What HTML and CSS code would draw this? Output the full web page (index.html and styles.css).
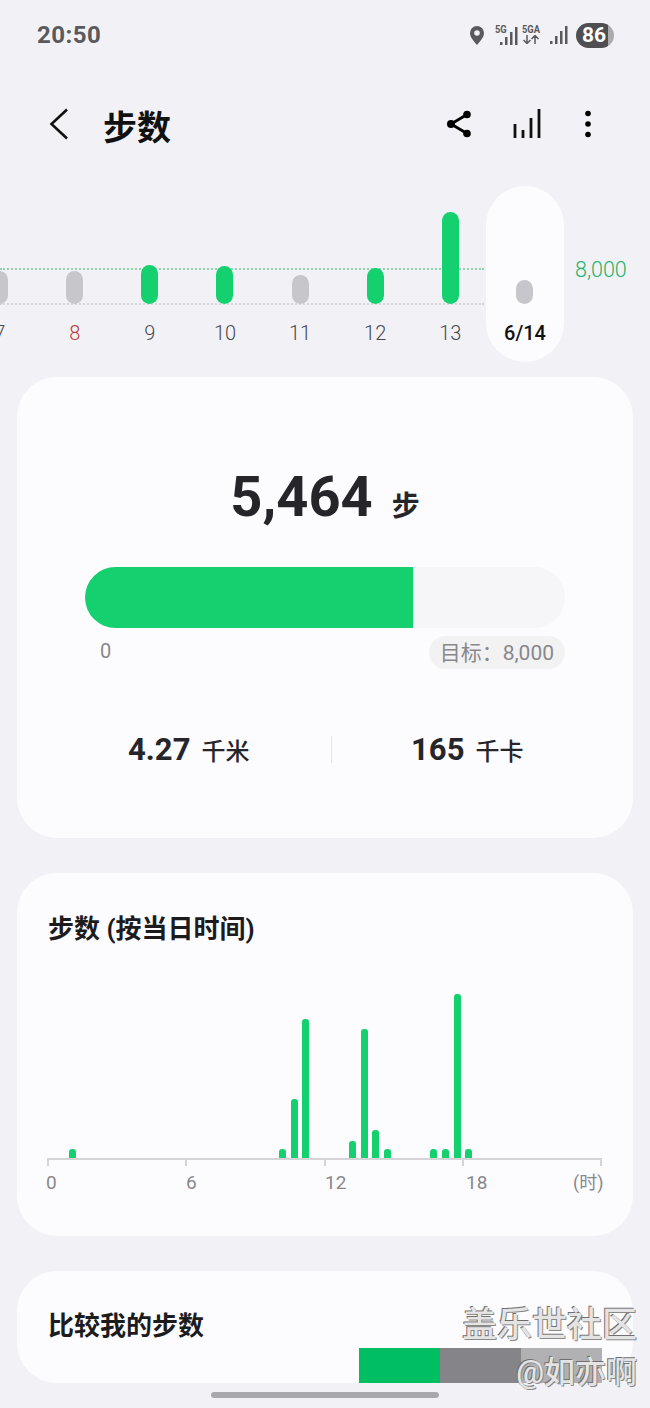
FILE: index.html
```html
<!DOCTYPE html>
<html lang="zh-CN">
<head>
    <meta charset="UTF-8">
    <meta name="viewport" content="width=device-width, initial-scale=1.0">
    <title>步数</title>
    <link rel="stylesheet" href="styles.css">
</head>
<body>
    <div id="screen">
        <div class="status-bar">
            <span class="clock">20:50</span>
            <div class="status-icons">
                <svg class="pin" width="14" height="19" viewBox="0 0 14 19"><path fill-rule="evenodd" d="M7 0a7 7 0 0 1 7 7c0 4.600-4.500 9-7 12-2.500-3-7-7.400-7-12a7 7 0 0 1 7-7zm0 4.200a2.800 2.800 0 1 0 0 5.600 2.800 2.800 0 0 0 0-5.600z"/></svg>
                <div class="net net-5g">
                    <span class="net-label">5G</span>
                    <svg width="18" height="18" viewBox="0 0 18 18"><path d="M0 15h2.500v3H0zM5 10h2.500v8H5zM10 5h2.500v13H10zM15 0h2.500v18H15z"/></svg>
                </div>
                <div class="net net-5ga">
                    <span class="net-label">5GA</span>
                    <svg width="18" height="9" viewBox="0 0 18 9" fill="none" stroke="#5a5a5c" stroke-width="1.500"><path d="M5 0v8M1.500 5 5 8.500 8.500 5M13 9V1M9.500 4 13 .5 16.500 4"/></svg>
                </div>
                <svg class="signal" width="18" height="18" viewBox="0 0 18 18"><path d="M0 15h2.500v3H0zM5 10h2.500v8H5zM10 5h2.500v13H10zM15 0h2.500v18H15z"/></svg>
                <div class="battery"><span>86</span></div>
            </div>
        </div>

        <div class="app-bar">
            <svg class="back" width="20" height="32" viewBox="0 0 20 32" fill="none" stroke="#111" stroke-width="2.600"><path d="M18 1.500 2.500 16 18 30.500"/></svg>
            <div class="page-title">步数</div>
            <svg class="share" width="24" height="28" viewBox="0 0 24 28"><path d="M20 4.500 4 14l16 9.500" fill="none" stroke="#000" stroke-width="2.800"/><circle cx="20" cy="4.500" r="3.800"/><circle cx="4" cy="14" r="4"/><circle cx="20" cy="23.500" r="3.800"/></svg>
            <svg class="stats" width="28" height="30" viewBox="0 0 28 30" fill="none" stroke="#111" stroke-width="2.800"><path d="M2 15v14M10 21v8M18 9v20M26 0v29"/></svg>
            <svg class="more" width="8" height="28" viewBox="0 0 8 28"><circle cx="4" cy="3.500" r="2.800"/><circle cx="4" cy="14" r="2.800"/><circle cx="4" cy="24.500" r="2.800"/></svg>
        </div>

        <div class="trend">
            <div class="line line-goal"></div>
            <div class="line line-base"></div>
            <div class="day"><div class="plot"><div class="pill off h33"></div></div><span>7</span></div>
            <div class="day red"><div class="plot"><div class="pill off h33"></div></div><span>8</span></div>
            <div class="day"><div class="plot"><div class="pill h39"></div></div><span>9</span></div>
            <div class="day"><div class="plot"><div class="pill h38"></div></div><span>10</span></div>
            <div class="day"><div class="plot"><div class="pill off h29"></div></div><span>11</span></div>
            <div class="day"><div class="plot"><div class="pill h36"></div></div><span>12</span></div>
            <div class="day"><div class="plot"><div class="pill h92"></div></div><span>13</span></div>
            <div class="day today"><div class="plot"><div class="pill off h24"></div></div><span>6/14</span></div>
            <div class="goal-label">8,000</div>
        </div>

        <div class="card card-today">
            <div class="total"><b>5,464</b><span>步</span></div>
            <div class="progress"><div class="progress-fill" style="width: 68.300%"></div></div>
            <div class="progress-labels">
                <span class="zero">0</span>
                <span class="target">目标：8,000</span>
            </div>
            <div class="summary">
                <div class="summary-item"><b>4.27</b><span>千米</span></div>
                <div class="summary-divider"></div>
                <div class="summary-item"><b>165</b><span>千卡</span></div>
            </div>
        </div>

        <div class="card card-hours">
            <h2>步数 (按当日时间)</h2>
            <div class="hour-bars">
                <i style="grid-column: 3; height: 9px"></i>
                <i style="grid-column: 21; height: 9px"></i>
                <i style="grid-column: 22; height: 59px"></i>
                <i style="grid-column: 23; height: 139px"></i>
                <i style="grid-column: 27; height: 17px"></i>
                <i style="grid-column: 28; height: 129px"></i>
                <i style="grid-column: 29; height: 28px"></i>
                <i style="grid-column: 30; height: 9px"></i>
                <i style="grid-column: 34; height: 9px"></i>
                <i style="grid-column: 35; height: 9px"></i>
                <i style="grid-column: 36; height: 164px"></i>
                <i style="grid-column: 37; height: 9px"></i>
            </div>
            <div class="axis"><i></i><i></i><i></i><i></i><i></i></div>
            <div class="axis-labels">
                <span>0</span><span>6</span><span>12</span><span>18</span><span>(时)</span>
            </div>
        </div>

        <div class="card card-compare">
            <h2>比较我的步数</h2>
            <div class="compare-bar"><i></i><i></i><i></i></div>
        </div>

        <div class="nav-bar"><div class="nav-handle"></div></div>

        <div class="watermark">
            <div class="wm-site">盖乐世社区</div>
            <div class="wm-user">@如亦啊</div>
        </div>
    </div>
</body>
</html>
```

FILE: styles.css
```css
body, html {
    margin: 0;
    padding: 0;
    background: #f2f2f6;
    font-family: Roboto, "Noto Sans CJK SC", sans-serif;
}
#screen {
    position: relative;
    width: 650px;
    height: 1408px;
    overflow: hidden;
}

/* status bar */
.status-bar {
    display: flex;
    align-items: center;
    height: 70px;
    padding: 0 36px 0 37px;
    color: #5a5a5c;
}
.clock {
    font-size: 24px;
    font-weight: 700;
    letter-spacing: 0.5px;
    flex: 1;
}
.status-icons {
    display: flex;
    align-items: center;
}
.status-icons svg {
    fill: #5a5a5c;
}
.pin {
    margin-right: 11px;
}
.net {
    position: relative;
    width: 18px;
    height: 22px;
    font-weight: 700;
}
.net-label {
    display: block;
    font-size: 11px;
    line-height: 11px;
    transform: scaleX(0.85);
    transform-origin: left;
}
.net-5g {
    width: 23px;
    margin-right: 4px;
}
.net-5g svg {
    position: absolute;
    right: 0;
    top: 3px;
}
.net-5ga svg {
    display: block;
    fill: none;
}
.signal {
    margin-left: 10px;
}
.battery {
    width: 38px;
    height: 25px;
    margin-left: 8px;
    border-radius: 13px;
    background: linear-gradient(to right, #4f4f51 84%, #ababad 84%);
    color: #fff;
    font-size: 21px;
    font-weight: 700;
    line-height: 25px;
    text-align: center;
}
.battery span {
    display: block;
    width: 36px;
}

/* app bar */
.app-bar {
    display: flex;
    align-items: center;
    height: 112px;
    padding-left: 49px;
}
.app-bar svg {
    margin-bottom: 4px;
}
.page-title {
    margin: 0 0 2px 34px;
    width: 344px;
    color: #111;
    font-size: 34px;
    font-weight: 700;
}
.stats {
    margin-left: 42px;
}
.more {
    margin-left: 43px;
}

/* daily trend */
.trend {
    position: relative;
    display: flex;
    height: 195px;
    padding-top: 4px;
    box-sizing: border-box;
    margin-left: -37.850px;
}
.line {
    position: absolute;
    left: 38px;
    width: 484px;
    height: 0;
}
.line-goal {
    top: 86px;
    border-top: 2px dotted #8fd4b0;
}
.line-base {
    top: 121px;
    border-top: 2px dotted #d6d6da;
}
.day {
    position: relative;
    width: 75.100px;
    height: 176px;
    color: #48484e;
    font-size: 20px;
    font-weight: 300;
    text-align: center;
}
.day span {
    display: block;
    line-height: 30px;
    margin-top: 14px;
}
.red {
    color: #bb3a3a;
}
.today {
    width: 78px;
    margin-left: -1.850px;
    background: #fcfcff;
    border-radius: 39px;
    color: #111;
    font-weight: 500;
}
.plot {
    display: flex;
    align-items: flex-end;
    justify-content: center;
    height: 118px;
}
.pill {
    width: 17px;
    border-radius: 9px;
    background: #14d06f;
}
.off {
    background: #c7c7cb;
}
.h24 { height: 24px; }
.h29 { height: 29px; }
.h33 { height: 33px; }
.h36 { height: 36px; }
.h38 { height: 38px; }
.h39 { height: 39px; }
.h92 { height: 92px; }
.goal-label {
    margin: 70px 0 0 11px;
    color: #1fb26b;
    font-size: 21.500px;
    font-weight: 300;
    line-height: 28px;
}

/* cards */
.card {
    margin: 0 17px 35px;
    background: #fcfcff;
    border-radius: 40px;
    box-sizing: border-box;
}
h2 {
    margin: 0;
    color: #1c1c1e;
    font-size: 26px;
    font-weight: 700;
}

.card-today {
    height: 461px;
    padding: 84px 68px 0;
}
.total {
    display: flex;
    justify-content: center;
    align-items: baseline;
    height: 72px;
    color: #26262a;
    line-height: 72px;
}
.total b {
    font-size: 56px;
    font-weight: 700;
}
.total span {
    margin-left: 19px;
    font-size: 28px;
    font-weight: 700;
}
.progress {
    height: 61px;
    margin-top: 34px;
    border-radius: 31px;
    background: #f6f6f9;
    overflow: hidden;
}
.progress-fill {
    height: 100%;
    background: #14d06f;
}
.progress-labels {
    display: flex;
    justify-content: space-between;
    align-items: flex-start;
    margin-top: 8px;
    color: #88888c;
    font-size: 20px;
}
.zero {
    margin-left: 15px;
    line-height: 30px;
}
.target {
    height: 33px;
    padding: 0 11px;
    border-radius: 17px;
    background: #f2f2f3;
    font-size: 21px;
    line-height: 35px;
}
.summary {
    display: flex;
    align-items: center;
    height: 30px;
    margin: 65px -41px 0 -35px;
}
.summary-item {
    flex: 1;
    display: flex;
    justify-content: center;
    align-items: baseline;
    color: #26262a;
}
.summary-item b {
    font-size: 31px;
    font-weight: 700;
}
.summary-item span {
    margin-left: 11px;
    font-size: 24px;
    font-weight: 500;
}
.summary-divider {
    width: 1px;
    height: 27px;
    margin: 0 -3px 0 3px;
    background: #e6e6ea;
}

.card-hours {
    height: 363px;
    padding-top: 38px;
}
.card-hours h2 {
    margin-left: 31px;
    line-height: 36px;
}
.hour-bars {
    display: grid;
    grid-template-columns: repeat(48, 11.67px);
    align-items: end;
    height: 164px;
    margin: 47px 0 0 26.500px;
}
.hour-bars i {
    grid-row: 1;
    width: 7px;
    justify-self: center;
    border-radius: 3px 3px 0 0;
    background: #14d06f;
}
.axis {
    display: flex;
    justify-content: space-between;
    width: 555px;
    height: 8px;
    margin-left: 30px;
    border-top: 2px solid #d4d4d6;
    box-sizing: border-box;
}
.axis i {
    width: 2px;
    background: #d4d4d6;
}
.axis-labels {
    display: grid;
    grid-template-columns: 140px 139px 141px 107px auto;
    margin: 3px 0 0 29px;
    color: #88888c;
    font-size: 19px;
    line-height: 28px;
}
.axis-labels span:last-child {
    font-size: 18px;
}

.card-compare {
    position: relative;
    height: 112px;
    margin-bottom: 0;
    padding: 37px 0 0 31px;
}
.card-compare h2 {
    line-height: 36px;
}
.compare-bar {
    position: absolute;
    right: 31px;
    bottom: 0;
    display: flex;
    height: 35px;
}
.compare-bar i {
    width: 81px;
    background: #b1b1b3;
}
.compare-bar i:nth-child(1) {
    background: #00bf63;
}
.compare-bar i:nth-child(2) {
    background: #858488;
}

.nav-bar {
    display: flex;
    justify-content: center;
    padding-top: 9px;
}
.nav-handle {
    width: 228px;
    height: 6px;
    border-radius: 3px;
    background: #a9a9ad;
}

/* watermark sits over the last card */
.watermark {
    position: absolute;
    right: 13px;
    top: 1304px;
    text-align: right;
    color: #e4e4e4;
    font-weight: 500;
    text-shadow: -1px -1px 0 #6f6f6f, 1px 1px 0 #8a8a8a;
}
.wm-site {
    font-size: 35px;
    line-height: 44px;
}
.wm-user {
    margin-top: 3px;
    font-size: 31px;
    line-height: 44px;
}
```
